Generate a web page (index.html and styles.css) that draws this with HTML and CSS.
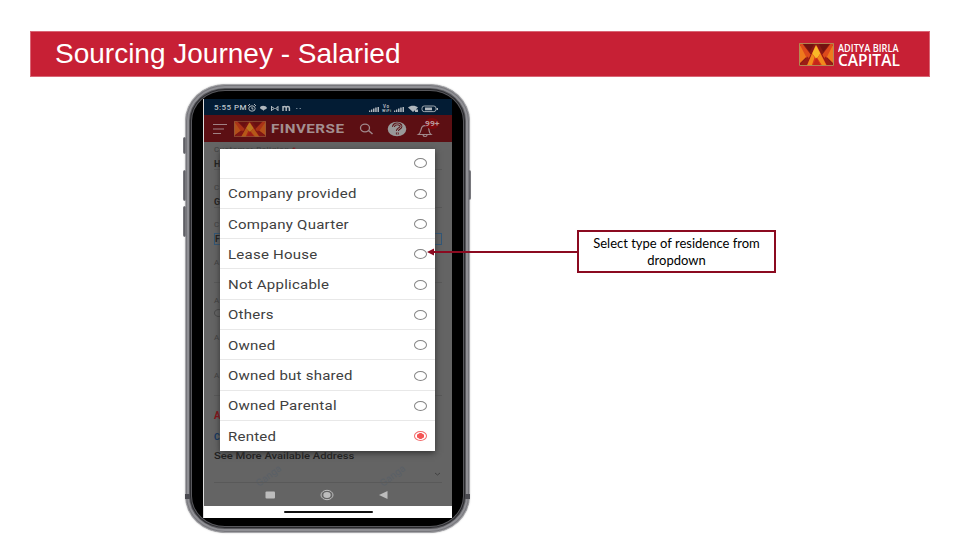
FILE: index.html
```html
<!DOCTYPE html>
<html lang="en">
<head>
<meta charset="utf-8">
<title>Sourcing Journey - Salaried</title>
<link rel="stylesheet" href="styles.css">
</head>
<body>
<header class="banner">
  <h1>Sourcing Journey - Salaried</h1>
  <div class="brand">
    <svg class="emblem" viewBox="0 0 36 24" preserveAspectRatio="none">
      <defs><g id="sun">
        <path fill="#8a1a14" d="M0 0h36v24H0z"/>
        <path fill="#ef7a1d" d="M0 1 10 12 0 22zM36 1 26 12l10 10z"/>
        <path fill="#dd4a1b" d="M0 0h3l9 12-3 6zM36 0h-3l-9 12 3 6z"/>
        <path fill="#741210" d="M4 0h12l-5 9zM32 0H20l5 9z"/>
        <path fill="#9c1c15" d="M0 24 9 14l5 10zM36 24l-9-10-5 10z"/>
        <path fill="#d9331b" d="M17 2 8 24h7l4-9zM18 2l11 22h-7l-5-9z"/>
        <path fill="#f9b928" d="m17.500 2 4.500 9-4 6-4.500-6z"/>
        <path fill="#f28a1c" d="m13.500 11-5.500 13h5l3-9zM22 11l6.500 13H24l-5-8z"/>
        <path fill="#c4261a" d="m18 15 4 9h-8z"/>
        <path fill="none" stroke="#b38b55" d="M.5.5h35v23H.5z"/>
      </g></defs>
      <use href="#sun"/>
    </svg>
    <div class="brand-name"><span class="brand-top">ADITYA BIRLA</span><strong>CAPITAL</strong></div>
  </div>
</header>
<main>
  <section class="phone">
    <i class="key key-a"></i><i class="key key-b"></i><i class="key key-c"></i><i class="key key-d"></i>
    <i class="band band-l"></i><i class="band band-r"></i>
    <div class="screen">
      <div class="status">
        <span class="clock">5:55 PM</span>
        <svg class="status-left" viewBox="0 0 56 12" fill="none" stroke="#b0b7bd">
          <ellipse cx="5" cy="6.500" rx="3.200" ry="2.700"/><path d="M5 5v2h1.500M1 4l2-2M9 4 7 2"/>
          <path fill="#b0b7bd" stroke="none" d="M13 6c0-3 6-3 7 0-1 2-3 1-3.500 3C16 7 14 8 13 6z"/>
          <path d="M24.500 4v5M31 4v5M25 5l2.500 1.500L25 8M31 5l-2.500 1.500L31 8"/>
          <path stroke-width="1.500" d="M36 9V4M36 6c0-2 3.200-2 3.200 0v3M39.200 6c0-2 3.200-2 3.200 0v3"/>
          <path stroke-width="1.200" stroke="#708090" d="M49 6.500h1.500M52.500 6.500H54"/>
        </svg>
        <svg class="status-right" viewBox="0 0 70 12" fill="#b0b7bd">
          <path d="M0 8.500h1.300V10H0zM2 7.500h1.300V10H2zM4 6.500h1.500V10H4zM6.200 5.500h1.500V10H6.200zM8.500 5H10v5H8.500z"/>
          <text x="14" y="6" font-size="4.500" font-weight="700" textLength="6">Vo</text><text x="13" y="10" font-size="4" font-weight="700" textLength="9">WiFi</text>
          <path d="M25 8.500h1.300V10H25zM27 7.500h1.300V10H27zM29 6.500h1.500V10H29zM31.200 5.500h1.500V10H31.200zM33.500 5H35v5H33.500z"/>
          <path d="M39 5.500c2.500-2.500 7.500-2.500 10 0l-5 4.500zM46 7.500h3V10h-3z"/>
          <rect x="53" y="4" width="14" height="5.600" rx="2.200" fill="none" stroke="#a0a8af"/><path d="M56 5.500h7v2.800h-7zM67.500 6H69v2h-1.500z"/>
        </svg>
      </div>
      <div class="appbar">
        <svg class="menu" viewBox="0 0 14 12"><path stroke="#a08285" stroke-width="1.200" d="M0 1.500h14M0 6h11M0 10.500h8"/></svg>
        <svg class="mini-emblem" viewBox="0 0 36 24" preserveAspectRatio="none"><use href="#sun"/></svg>
        <b><span>FINVERSE</span></b>
        <svg class="actions" viewBox="0 0 86 24" fill="none" stroke="#a0898c">
          <ellipse cx="7" cy="11" rx="4.500" ry="3.800" stroke-width="1.300"/><path stroke-width="1.500" d="m10.500 13.500 4 3.500"/>
          <ellipse cx="39" cy="12" rx="9.300" ry="7.300" fill="#999" stroke="none"/>
          <path stroke="#5a1518" stroke-width="2.800" d="M35.500 10c0-4 7.500-4 7.500-.5 0 2-3.700 2-3.700 4.500M39.300 15.500v2"/>
          <path stroke="#aaa" stroke-width=".9" d="M35.500 10c0-4 7.500-4 7.500-.5 0 2-3.700 2-3.700 4.500M39.300 15.500v2"/>
          <path stroke-width="1.200" d="M60.500 17.500c3-2 2-6.500 4-8 1.500-1.500 5-1 6 1 1 3 0 5 2.500 7zM65 18c.5 2 4 2 4 0"/>
          <ellipse cx="74" cy="6.500" rx="7" ry="5.500" fill="#7c090d" stroke="none"/>
          <text x="67" y="8.500" fill="#b59a9c" stroke="none" font-size="7.500" font-weight="700" textLength="14.500" lengthAdjust="spacingAndGlyphs">99+</text>
        </svg>
      </div>
      <div class="form">
        <div class="field"><label>Customer Religion <em>*</em></label><p>H</p></div>
        <div class="field"><label>C</label><p>G</p></div>
        <div class="field"><label>C</label><p class="focused">F</p></div>
        <div class="field"><label>A</label><p></p></div>
        <div class="field"><label>A</label><p class="plain"><i class="ring"></i></p></div>
        <div class="field"><label>A</label></div>
        <div class="field"><label>A</label><p></p></div>
        <div class="section-title">A</div>
        <div class="section-link">C</div>
        <div class="more"><span>See More Available Address</span></div>
        <svg class="footer-line" viewBox="0 0 228 28" fill="none">
          <g fill="#5a6067" font-size="10"><text transform="translate(45 24) rotate(-37)">Ganga</text><text transform="translate(169 24) rotate(-37)">Ganga</text></g>
          <path stroke="#414141" d="m221 10 2.500 2 2.500-2"/><path stroke="#595959" d="M0 19.500h228"/>
        </svg>
      </div>
      <svg class="nav" viewBox="0 0 249 22" fill="#bdbdbd">
        <rect x="61.500" y="7.500" width="9.500" height="7" rx="1"/>
        <ellipse cx="123" cy="11" rx="6" ry="4.700" fill="none" stroke="#bdbdbd"/><ellipse cx="123" cy="11" rx="3.700" ry="2.900"/>
        <path d="m175 11 8.500-4v8z"/>
      </svg>
      <div class="home"><i></i></div>
      <ul class="options">
        <li><span></span><i class="radio"></i></li>
        <li><span>Company provided</span><i class="radio"></i></li>
        <li><span>Company Quarter</span><i class="radio"></i></li>
        <li><span>Lease House</span><i class="radio"></i></li>
        <li><span>Not Applicable</span><i class="radio"></i></li>
        <li><span>Others</span><i class="radio"></i></li>
        <li><span>Owned</span><i class="radio"></i></li>
        <li><span>Owned but shared</span><i class="radio"></i></li>
        <li><span>Owned Parental</span><i class="radio"></i></li>
        <li><span>Rented</span><i class="radio on"></i></li>
      </ul>
    </div>
  </section>
  <aside class="callout"><span>Select type of residence from<br>dropdown</span></aside>
  <svg class="arrow" viewBox="0 0 152 10"><path stroke="#8b0a20" stroke-width="2" d="M5 5h147"/><path fill="#8b0a20" d="m0 5 7-3.500v7z"/></svg>
</main>
</body>
</html>
```
FILE: styles.css
```css
* { box-sizing: border-box; }
body { margin: 0; width: 960px; height: 540px; overflow: hidden; background: #fff; font-family: Roboto, sans-serif; padding-top: 31px; }
h1, p, ul { margin: 0; padding: 0; }
svg { display: block; }
.banner { margin: 0 30px; height: 46px; background: #c72035; border: 1px solid #d96675; display: flex; align-items: center; justify-content: space-between; padding: 0 29px 0 24px; color: #fff; }
h1 { font: 400 28px/44px "Liberation Sans", sans-serif; white-space: nowrap; }
.brand { display: flex; align-items: center; gap: 4px; width: 101px; }
.emblem { width: 35px; height: 23px; flex: none; }
.brand-name { font-family: "Open Sans", sans-serif; white-space: nowrap; width: 62px; }
.brand-name span, .brand-name strong { display: block; transform-origin: left; }
.brand-top { font-size: 11.500px; line-height: 11px; font-weight: 600; transform: scaleX(.8); }
.brand-name strong { font-size: 16px; line-height: 14px; font-weight: 600; transform: scaleX(.97); }
main { position: relative; display: flex; align-items: flex-start; }
.phone { position: relative; margin: 7px 0 0 185px; width: 285px; height: 449px; border: 1px solid #a6a6aa; border-radius: 40px / 37px; background: #000; padding: 14px 0 0 17px; box-shadow: inset 0 0 0 1px #77777c, inset 0 0 0 3px #8f8f94, inset 0 0 0 4px #56565a, inset 0 0 0 5px #2a2a2e, inset 0 0 0 6px #58585c, 0 0 2px #ccc; }
.screen { position: relative; width: 249px; height: 419px; background: #646464; border-left: 1px solid #ddd; display: flex; flex-direction: column; }
.status { height: 16px; flex: none; background: #031c34; color: #bcc3c8; display: flex; align-items: center; padding-left: 10px; }
.clock { font-size: 8px; font-weight: 500; width: 33px; white-space: nowrap; letter-spacing: .45px; padding-top: 1px; }
.status-left { width: 56px; height: 12px; margin-top: 1px; }
.status-right { width: 70px; height: 12px; margin: 1px 0 0 66px; }
.appbar { height: 27px; flex: none; background: #5c0f13; display: flex; align-items: center; padding-left: 9px; }
.menu { width: 14px; height: 12px; margin-right: 7px; }
.mini-emblem { width: 32px; height: 16px; opacity: .6; }
.appbar b { font-size: 13px; color: #a38f90; width: 87px; padding-left: 5px; }
.appbar b span { display: inline-block; transform: scaleX(1.17); transform-origin: left; letter-spacing: .4px; }
.actions { width: 86px; height: 24px; margin-left: 5px; }
.form { height: 342px; flex: none; padding: 2px 0 0 10px; font-size: 9px; color: #202020; }
.field { height: 37.700px; }
label { display: block; font-size: 8px; line-height: 11px; color: #414141; letter-spacing: .6px; }
label em { color: #8d1018; }
.field p { width: 228px; height: 12px; margin-top: 3px; line-height: 12px; font-weight: 700; border-bottom: 1px solid #595959; }
.field .focused { border: 1px solid #315879; line-height: 10px; }
.field .plain { border: 0; }
.ring { display: block; width: 10px; height: 8px; border: 1px solid #484848; border-radius: 50%; }
.section-title { height: 20px; line-height: 16px; color: #8a1017; font-weight: 700; font-size: 10px; }
.section-link { height: 20px; line-height: 18px; color: #123660; font-weight: 700; }
.more { height: 15px; line-height: 15px; font-size: 9.500px; font-weight: 500; }
.more span { display: inline-block; transform: scaleX(1.18); transform-origin: left; white-space: nowrap; }
.footer-line { width: 228px; height: 28px; overflow: visible; }
.nav { width: 249px; height: 22px; flex: none; }
.home { flex: 1; background: #fff; display: flex; align-items: center; justify-content: center; }
.home i { width: 89px; height: 2px; border-radius: 2px; background: #111; }
.options { position: absolute; left: 16px; top: 50px; width: 215px; list-style: none; background: #fff; box-shadow: 0 2px 6px #333; font-size: 12.500px; color: #404040; }
.options li { height: 30.300px; border-bottom: 1px solid #e8e8e8; display: flex; align-items: center; justify-content: space-between; padding: 1px 8px 0; }
.options li:first-child { height: 29.600px; padding-top: 0; }
.options li:last-child { border: 0; padding-top: 0; }
.options span { transform: scaleX(1.2); transform-origin: left; white-space: nowrap; letter-spacing: .2px; }
.radio { width: 13px; height: 10px; border: 1.500px solid #858585; border-radius: 50%; }
.radio.on { border: 1px solid #f26a6a; background: radial-gradient(ellipse 4px 3px, #f45555 85%, #fff 100%); }
.key, .band { position: absolute; background: #606066; }
.key { width: 3px; border-radius: 2px; border: 1px solid #77777c; }
.key-a { left: -3px; top: 52px; height: 17px; }
.key-b { left: -3px; top: 85px; height: 31px; }
.key-c { left: -3px; top: 121px; height: 31px; }
.key-d { right: -2px; top: 85px; height: 30px; }
.band { width: 5px; height: 5px; background: #4a4a50; }
.band-l { left: -1px; top: 409px; }
.band-r { right: -1px; top: 409px; }
.callout { margin: 153px 0 0 107px; width: 199px; height: 43px; border: 2px solid #8b0a20; color: #000; font: 13px/17px Lato, sans-serif; text-align: center; display: flex; align-items: center; justify-content: center; white-space: nowrap; }
.arrow { position: absolute; left: 427px; top: 170px; width: 152px; height: 10px; }
```
